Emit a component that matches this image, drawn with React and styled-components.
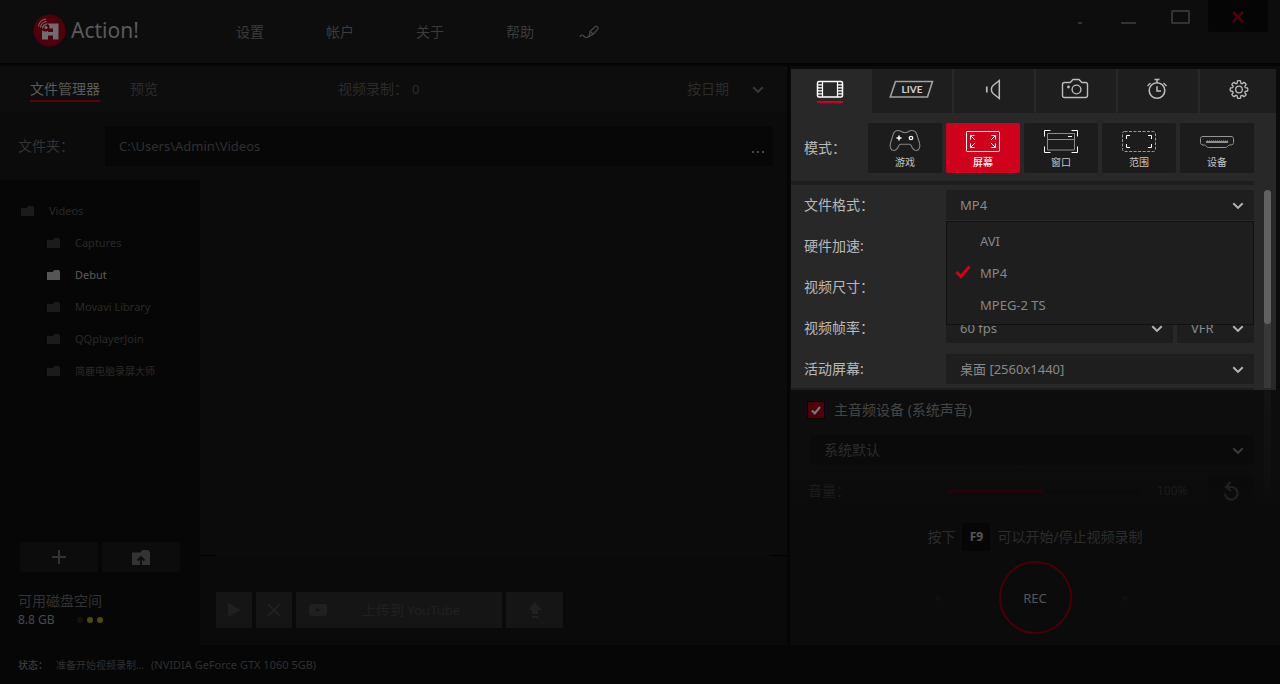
import React from 'react';
import styled, { createGlobalStyle, css } from 'styled-components';

const GlobalStyle = createGlobalStyle`
  *, *::before, *::after { box-sizing: border-box; }
  body {
    margin: 0;
    background: #060606;
    color: #333;
    font: 14px/20px "Noto Sans", "Noto Sans CJK SC", sans-serif;
  }
  button, input, select { font: inherit; color: inherit; margin: 0; }
  button { border: 0; padding: 0; background: none; cursor: pointer; }
  a { color: inherit; text-decoration: none; }
  ul { list-style: none; margin: 0; padding: 0; }
  svg { display: block; flex: none; }
`;

const Window = styled.div`
  display: flex;
  flex-direction: column;
  min-height: 100vh;
`;

/* ---------- Title bar ---------- */

const TitleBar = styled.header`
  display: flex;
  height: 66px;
  background: #0d0d0d;
  border-bottom: 3px solid #050505;
`;

const Brand = styled.div`
  display: flex;
  align-items: center;
  gap: 5px;
  width: 236px;
  padding: 0 0 3px 33px;
  color: #5a5a5a;
  font-size: 21px;
`;

const Nav = styled.nav`
  display: flex;
  align-items: center;
  gap: 62px;
  color: #3b3b3b;
`;

const PenButton = styled.button`
  padding: 0 12px;
  margin-left: 33px;
  color: #444;
`;

const WindowControls = styled.div`
  display: flex;
  margin-left: auto;
  padding-right: 12px;
  color: #333;
`;

const ControlButton = styled.button`
  display: grid;
  place-items: center;
  width: ${(p) => p.$width || 48}px;
  height: 32px;
  padding-top: 2px;
  ${(p) => p.$close && css`
    color: #50000a;
    background: #050505;
    border-radius: 0 0 3px 3px;
  `}
`;

/* ---------- Shared fields ---------- */

const SelectWrap = styled.span`
  display: grid;
  flex: ${(p) => p.$flex || 'none'};
  width: ${(p) => (p.$width ? `${p.$width}px` : 'auto')};
  min-width: 0;
  align-items: center;
  color: ${(p) => p.$icon || '#b4b4b4'};
  > * { grid-area: 1 / 1; }
  > svg { justify-self: end; margin: 2px 10px 0 0; pointer-events: none; }
`;

const NativeSelect = styled.select`
  appearance: none;
  width: 100%;
  height: 30px;
  padding: 0 30px 0 ${(p) => (p.$bare ? 0 : 14)}px;
  border: 0;
  border-radius: 2px;
  outline: 0;
  background: ${(p) => p.$bg || '#1e1e1e'};
  color: ${(p) => p.$text || '#898989'};
  font-size: ${(p) => p.$size || 13}px;
`;

/* ---------- File manager ---------- */

const Main = styled.main`
  display: grid;
  grid-template-columns: minmax(0, 1fr) 490px;
  gap: 3px;
  flex: 1;
  background: #050505;
`;

const FilePanel = styled.section`
  display: flex;
  flex-direction: column;
  background: #0b0b0b;
`;

const FileTabs = styled.div`
  display: flex;
  align-items: center;
  height: 46px;
  padding: 0 13px 0 30px;
  background: #0d0d0d;
  color: #2b2b2b;
`;

const TabGroup = styled.div`
  display: flex;
  gap: 30px;
  width: 308px;
`;

const FileTab = styled.button`
  height: 26px;
  padding-top: 2px;
  border-bottom: 2px solid transparent;
  ${(p) => p.$active && css`
    color: #5a5a5a;
    border-color: #60000a;
  `}
`;

const Counter = styled.span`
  flex: 1;
  display: flex;
  gap: 4px;
  b { font-weight: 400; font-size: 13px; }
`;

const FolderRow = styled.div`
  display: flex;
  align-items: center;
  padding: 14px 14px 14px 18px;
  label { width: 87px; }
`;

const PathBox = styled.div`
  display: flex;
  flex: 1;
  height: 40px;
  background: #070707;
  border-radius: 2px;
  color: #303030;
`;

const PathInput = styled.input`
  flex: 1;
  min-width: 0;
  padding: 0 14px;
  border: 0;
  outline: 0;
  background: none;
  font-size: 13px;
`;

const BrowseButton = styled.button`
  width: 30px;
  padding-top: 12px;
  display: grid;
  place-items: center;
`;

const Browser = styled.div`
  display: grid;
  grid-template-columns: 200px minmax(0, 1fr);
  flex: 1;
`;

const Sidebar = styled.aside`
  display: flex;
  flex-direction: column;
  padding: 14px 0 16px;
  background: #060606;
  border-top: 1px solid #050505;
`;

const Folder = styled.button`
  display: flex;
  align-items: center;
  gap: 15px;
  width: 100%;
  height: 32px;
  padding-left: ${(p) => (p.$root ? 21 : 47)}px;
  color: ${(p) => (p.$active ? '#5c5c5c' : '#292929')};
  svg { color: ${(p) => (p.$active ? '#555' : '#1b1b1b')}; }
  span { font-size: ${(p) => (p.$small ? 10 : 11)}px; }
`;

const FolderActions = styled.div`
  display: flex;
  gap: 4px;
  margin-top: auto;
  padding: 0 20px;
`;

const FolderAction = styled.button`
  flex: 1;
  display: grid;
  place-items: center;
  height: 30px;
  background: #0c0c0c;
  border-radius: 2px;
  color: #333;
`;

const DiskSpace = styled.div`
  padding: 19px 18px 0;
  color: #333;
`;

const DiskFree = styled.div`
  display: flex;
  align-items: center;
  gap: 22px;
  line-height: 18px;
  font-size: 12px;
  color: #4a4a4a;
`;

const Dots = styled.span`
  display: flex;
  gap: 4px;
`;

const Dot = styled.i`
  width: 6px;
  height: 6px;
  border-radius: 50%;
  background: ${(p) => p.$color};
`;

const Content = styled.div`
  display: flex;
  flex-direction: column;
`;

const FileList = styled.div`
  flex: 1;
`;

const Rule = styled.div`
  display: flex;
  justify-content: space-between;
  height: 1px;
  &::before, &::after { content: ''; width: 16px; background: #000; }
`;

const FileActions = styled.div`
  display: flex;
  gap: 4px;
  padding: 36px 16px 17px;
  background: #0a0a0a;
  color: #202020;
`;

const FileAction = styled.button`
  display: flex;
  align-items: center;
  justify-content: center;
  width: ${(p) => p.$width}px;
  height: 36px;
  background: #151515;
  border-radius: 1px;
  span { flex: 1; padding-right: 20px; }
  small { font-size: 13px; }
`;

/* ---------- Recording panel ---------- */

const RecordPanel = styled.section`
  display: flex;
  flex-direction: column;
  background: #0b0b0b;
  padding-top: 3px;
`;

const Lit = styled.div`
  margin: 0 4px 0 1px;
  background: #282828;
  color: #b9b9b9;
`;

const SourceTabs = styled.div`
  display: grid;
  grid-template-columns: 79px repeat(5, 80px);
  gap: 2px;
  height: 44px;
  overflow: hidden;
`;

const SourceTab = styled.button`
  display: flex;
  flex-direction: column;
  align-items: center;
  padding: 9px 2px 0 0;
  background: ${(p) => (p.$active ? 'none' : '#1e1e1e')};
  color: ${(p) => (p.$active ? '#fff' : '#bcbcbc')};
  &::after {
    content: '';
    width: 26px;
    height: 2px;
    background: ${(p) => (p.$active ? '#d0021b' : 'none')};
  }
`;

const Modes = styled.div`
  display: flex;
  align-items: center;
  gap: 4px;
  padding: 10px 22px 8px 13px;
`;

const ModesLabel = styled.span`
  flex: 1;
`;

const ModeButton = styled.button`
  display: flex;
  flex-direction: column;
  align-items: center;
  gap: 2px;
  width: 74px;
  height: 50px;
  padding-top: 6px;
  border-radius: 2px;
  font-size: 10px;
  line-height: 14px;
  background: ${(p) => (p.$active ? '#d0021b' : '#1c1c1c')};
  color: ${(p) => (p.$active ? '#fff' : '#c6c6c6')};
  font-weight: ${(p) => (p.$active ? 500 : 400)};
`;

const Separator = styled.div`
  height: ${(p) => p.$height}px;
  margin-right: 22px;
  background: #1e1e1e;
`;

const Scroller = styled.div`
  display: flex;
`;

const Fields = styled.div`
  flex: 1;
  display: flex;
  flex-direction: column;
  gap: 11px;
  padding: 5px 10px 4px 13px;
`;

const FieldRow = styled.div`
  position: relative;
  display: flex;
  gap: 4px;
  height: 30px;
  align-items: center;
  > label { flex: 1; }
`;

const Rail = styled.div`
  width: 7px;
  margin: ${(p) => (p.$lit ? '5px 5px 0 0' : '0 9px 0 0')};
  border-radius: ${(p) => (p.$lit ? '4px 4px 0 0' : '0')};
  background: ${(p) => (p.$lit ? '#383838' : 'linear-gradient(#131313, #101010 70%, #0b0b0b)')};
`;

const Thumb = styled.div`
  height: 134px;
  border-radius: 4px;
  background: #626262;
`;

const Menu = styled.ul`
  position: absolute;
  z-index: 2;
  top: 31px;
  right: 0;
  width: 308px;
  padding: 3px 0;
  background: #1e1e1e;
  border: 1px solid #121212;
`;

const Option = styled.li`
  display: grid;
  grid-template-columns: 25px 1fr;
  align-items: center;
  height: 32px;
  padding-left: 8px;
  font-size: 13px;
  color: #868686;
  svg { color: #d0021b; margin-bottom: 3px; }
  span { grid-column: 2; }
`;

const AudioFields = styled.div`
  flex: 1;
  display: flex;
  flex-direction: column;
  gap: 11px;
  padding: 6px 10px 0 18px;
`;

const AudioSection = styled.div`
  display: flex;
  height: 116px;
  background: linear-gradient(#0d0d0d 50%, #0b0b0b);
`;

const AudioToggle = styled.label`
  display: flex;
  align-items: center;
  height: 30px;
  gap: 10px;
  color: #454545;
`;

const CheckSlot = styled.span`
  display: grid;
  place-items: center;
  color: #777;
  > * { grid-area: 1 / 1; }
  > svg { pointer-events: none; }
`;

const CheckInput = styled.input`
  appearance: none;
  width: 16px;
  height: 16px;
  background: #500009;
  border-radius: 1px;
  outline: 1px solid #060606;
`;

const SelectRow = styled.div`
  display: flex;
  padding-left: 2px;
`;

const VolumeRow = styled.div`
  display: flex;
  align-items: center;
  height: 30px;
  color: #1c1c1c;
  label { width: 140px; }
  output { width: 68px; padding-left: 17px; font-size: 12px; }
`;

const Slider = styled.input`
  appearance: none;
  flex: 1;
  min-width: 0;
  height: 4px;
  background: linear-gradient(90deg, #20060a 50%, #0a0a0a 50%);
  &::-webkit-slider-thumb { appearance: none; width: 0; }
`;

const ResetButton = styled.button`
  display: grid;
  place-items: center;
  width: 46px;
  height: 30px;
  color: #212121;
  background: linear-gradient(#0a0a0a, #0b0b0b);
`;

const RecordArea = styled.div`
  display: flex;
  flex-direction: column;
  align-items: center;
  flex: 1;
  padding-top: 16px;
  border-top: 1px solid #0a0a0a;
`;

const Hint = styled.p`
  display: flex;
  align-items: center;
  gap: 7px;
  margin: 0;
  color: #2c2c2c;
`;

const Key = styled.kbd`
  width: 28px;
  background: #060606;
  border-radius: 3px;
  color: #565656;
  font: 700 12px/28px "Noto Sans", sans-serif;
  text-align: center;
`;

const RecordRow = styled.div`
  display: grid;
  grid-template-columns: 64px 73px 56px;
  align-items: center;
  margin-top: 10px;
  padding-right: 8px;
  > :last-child { justify-self: end; }
`;

const RecordButton = styled.button`
  width: 73px;
  height: 73px;
  border: 2px solid #480005;
  border-radius: 50%;
  color: #565656;
  font-size: 13px;
`;

/* ---------- Status bar ---------- */

const StatusBar = styled.footer`
  display: flex;
  align-items: center;
  height: 39px;
  padding-left: 18px;
  background: #060606;
  color: #303030;
  font-size: 10px;
  strong { width: 38px; font-weight: 500; color: #3c3c3c; }
  span { margin-right: 7px; }
  em { font-style: normal; font-size: 11px; }
`;

/* ---------- Icons ---------- */

const Icon = ({ w, h, children, sw = 1, fill = 'none' }) => (
  <svg width={w} height={h} viewBox={`0 0 ${w} ${h}`} fill={fill} stroke="currentColor" strokeWidth={sw} aria-hidden="true">
    {children}
  </svg>
);

const Chevron = () => (
  <Icon w={12} h={8} sw={2}><path d="M1.3 1.3 6 5.9l4.7-4.6" /></Icon>
);

const Tick = ({ w = 16, h = 14, sw = 3 }) => (
  <svg width={w} height={h} viewBox="0 0 16 14" fill="none" stroke="currentColor" strokeWidth={sw} aria-hidden="true">
    <path d="M1.5 7 6 11.5 14.5 1.5" />
  </svg>
);

const Logo = () => (
  <svg width="33" height="33" viewBox="0 0 33 33" aria-hidden="true">
    <circle cx="16.5" cy="16.5" r="16" fill="#50000b" />
    <path d="M12 9.500h13.500v16H20v-4h-5v4H9V15h3zM15 14.500v3.500h5v-3.500z" fill="#6e6e6e" fillRule="evenodd" />
    <circle cx="12.500" cy="13.500" r="4" fill="#50000b" />
    <circle cx="13" cy="13.500" r="1.600" fill="#6e6e6e" />
    <path d="M9.500 14.500a4.200 4.200 0 0 1 4.200-4.200M7.500 13.500a6.500 6.500 0 0 1 6-6M5.500 12.500a8.500 8.500 0 0 1 7.500-7.500" fill="none" stroke="#6e6e6e" strokeWidth="1.200" />
  </svg>
);

const PenIcon = () => (
  <Icon w={21} h={14} sw={1.3}>
    <path d="M.8 11.800c1.200-2 2.800-2.200 4-.600s2.400 1.900 3.900.900l1.500-1.300M10.300 11.300l.800-5 5.300-4.800c1-.9 3.300.8 2.500 2.300l-4.600 5.400-4 2.100zM11.300 6.600l3 2.600" />
  </Icon>
);

const FolderIcon = () => (
  <svg width="13" height="10" viewBox="0 0 13 10" fill="currentColor" aria-hidden="true">
    <path d="M0 2h5.500L7.500 0H12l1 1.500V10H0z" />
  </svg>
);

const FolderUpIcon = () => (
  <svg width="18" height="15" viewBox="0 0 18 15" aria-hidden="true">
    <path d="M0 2.500h8L10.500 0H16l2 2v13H0z" fill="currentColor" />
    <path d="M9 15V7M5.500 10.500 9 7l3.500 3.500" fill="none" stroke="#0c0c0c" strokeWidth="1.800" />
  </svg>
);

const FilmIcon = () => (
  <Icon w={28} h={23} sw={1.5}>
    <rect x="1.500" y="3.500" width="25" height="15.500" rx="1.500" />
    <path d="M6.500 3.500V19M21.500 3.500V19" strokeWidth="1.200" />
    <path d="M1.500 6.800h5M1.500 9.800h5M1.500 12.800h5M1.500 15.900h5M21.500 6.800h5M21.500 9.800h5M21.500 12.800h5M21.500 15.900h5" strokeWidth="1.300" />
  </Icon>
);

const LiveIcon = () => (
  <Icon w={46} h={23} sw={1.6}>
    <path d="M7.500 3.500H44.500l-5 15.500H2.300z" stroke="#a0a0a0" />
    <text x="24" y="15" textAnchor="middle" fontSize="10" fontWeight="700" fontFamily="Lato, sans-serif" fill="#d2d2d2" stroke="none">LIVE</text>
  </Icon>
);

const SpeakerIcon = () => (
  <Icon w={18} h={23} sw={1.5}>
    <path d="M15.300 2.500v18l-6.200-5c-2.300-2-2.300-6 0-8z" />
    <path d="M2.800 8.500v6" strokeWidth="1.700" />
  </Icon>
);

const CameraIcon = () => (
  <Icon w={28} h={23} sw={1.4}>
    <path d="M3.500 4.500h5.700L12 1.500h6l2.800 3h3.700c1.300 0 2 .8 2 2v11c0 1.300-.8 2-2 2h-21c-1.300 0-2-.7-2-2v-11c0-1.200.7-2 2-2z" />
    <circle cx="15.500" cy="11.500" r="4.400" />
    <circle cx="7.500" cy="9" r=".700" fill="currentColor" />
  </Icon>
);

const TimerIcon = () => (
  <Icon w={22} h={23} sw={1.6}>
    <circle cx="11" cy="12.500" r="7.800" />
    <path d="M11 8.300v4.700h4M11 1.500v3M8.500 1.500h5" strokeWidth="1.500" />
    <path d="m1.500 8 3-3M20.500 8l-3-3" strokeWidth="1.300" />
  </Icon>
);

const gearPath = Array.from({ length: 8 }, (_, i) => {
  const at = (r, deg) => {
    const a = ((i * 45 + deg) * Math.PI) / 180;
    return `${(10 + r * Math.sin(a)).toFixed(2)} ${(11.5 - r * Math.cos(a)).toFixed(2)}`;
  };
  return `${i ? 'L' : 'M'}${at(6.7, -16)}L${at(8.7, -10)}Q${at(9.2, 0)} ${at(8.7, 10)}L${at(6.7, 16)}Q${at(6.100, 22.5)} ${at(6.7, 29)}`;
}).join('') + 'Z';

const GearIcon = () => (
  <Icon w={20} h={23} sw={1.3}>
    <path d={gearPath} strokeLinejoin="round" />
    <circle cx="10" cy="11.500" r="3.300" />
  </Icon>
);

const GameIcon = () => (
  <Icon w={32} h={24} sw={1.1}>
    <path d="M9.500 1.500c-2.500 0-4.500 1.200-5.300 3.800L1.500 14c-1 4 .3 7.500 3.300 7.500 2.800 0 3.500-1.800 4.800-4.500.6-1.300 1.200-1.800 2.400-1.800h8c1.200 0 1.800.5 2.400 1.800 1.300 2.700 2 4.500 4.800 4.500 3 0 4.300-3.500 3.300-7.500l-2.700-8.700c-.8-2.600-2.800-3.800-5.300-3.800-2 0-2.500.8-3.300 1.300-1.800 1-4.600 1-6.400 0-.8-.5-1.300-1.300-3.300-1.300z" stroke="#858585" />
    <path d="M10 6.500v5M7.500 9h5" stroke="#fff" strokeWidth="1.500" />
    <circle cx="22" cy="9" r="1.700" stroke="#fff" strokeWidth="1.300" />
  </Icon>
);

const ScreenIcon = () => (
  <Icon w={34} h={24}>
    <rect x=".5" y="2.500" width="33" height="20" rx=".8" />
    <path d="M9 11 4.500 6.500M4.500 10.500v-4h4M25 11l4.500-4.500M25.500 6.500h4v4M9 14l-4.500 4.500M4.500 14.500v4h4M25 14l4.500 4.500M25.500 18.500h4v-4" />
  </Icon>
);

const WindowIcon = () => (
  <Icon w={34} h={24}>
    <path d="M.5 7.500v-6h6M27.500 1.500h6v6M.5 17.500v6h6M27.500 23.500h6v-6" stroke="#fff" />
    <path d="M3.500 4.500h27v16.500h-27zM3.500 10.500h27" stroke="#8a8a8a" />
    <path d="M24 7.500h4" stroke="#fff" />
  </Icon>
);

const RegionIcon = () => (
  <Icon w={34} h={24}>
    <rect x=".5" y="2.500" width="33" height="20" rx="2" stroke="#999" strokeDasharray="3 1.500" />
    <path d="M4.500 10V6.500H8M26 6.500h3.500V10M4.500 15v3.500H8M26 18.500h3.500V15" stroke="#fff" />
  </Icon>
);

const DeviceIcon = () => (
  <Icon w={34} h={24}>
    <path d="M3 7.500h28c1.500 0 2.500.8 2.500 2v4c0 1.500-1 2.500-2.500 2.500h-1.500c-1.500 0-2 2.500-4 2.500H8.500c-2 0-2.500-2.500-4-2.500H3C1.500 16 .5 15 .5 13.500v-4c0-1.200 1-2 2.500-2z" stroke="#959595" />
    <path d="M6 13h22" stroke="#fff" />
    <path d="M7 12h21" stroke="#999" strokeDasharray="1 1" />
  </Icon>
);

const ResetIcon = () => (
  <Icon w={18} h={20} sw={2.2}>
    <path d="M5 6h4.500a6.300 6.300 0 1 1-6.500 6.500M8.500 1 4 5.800l5 4.200" />
  </Icon>
);

/* ---------- Components ---------- */

const Select = ({ id, label, options = [], flex, width, icon, ...look }) => (
  <SelectWrap $flex={flex} $width={width} $icon={icon}>
    <NativeSelect id={id} aria-label={label} {...look}>
      {options.map((o) => <option key={o}>{o}</option>)}
    </NativeSelect>
    <Chevron />
  </SelectWrap>
);

const folders = [
  { name: 'Videos', root: true },
  { name: 'Captures' },
  { name: 'Debut', active: true },
  { name: 'Movavi Library' },
  { name: 'QQplayerJoin' },
  { name: '简鹿电脑录屏大师', small: true },
];

const sources = [
  ['视频', FilmIcon],
  ['直播', LiveIcon],
  ['音频', SpeakerIcon],
  ['截图', CameraIcon],
  ['定时', TimerIcon],
  ['选项', GearIcon],
];

const modes = [
  ['游戏', GameIcon],
  ['屏幕', ScreenIcon],
  ['窗口', WindowIcon],
  ['范围', RegionIcon],
  ['设备', DeviceIcon],
];

const FileManager = () => (
  <FilePanel>
    <FileTabs>
      <TabGroup>
        <FileTab $active>文件管理器</FileTab>
        <FileTab>预览</FileTab>
      </TabGroup>
      <Counter>视频录制： <b>0</b></Counter>
      <Select label="排序" options={['按日期']} width={87} icon="#3a3a3a" $bare $bg="#0d0d0d" $text="#2b2b2b" $size={14} />
    </FileTabs>
    <FolderRow>
      <label htmlFor="path">文件夹：</label>
      <PathBox>
        <PathInput id="path" defaultValue="C:\Users\Admin\Videos" />
        <BrowseButton aria-label="浏览">
          <svg width="13" height="2" viewBox="0 0 13 2" fill="#444"><path d="M0 0h2v2H0zM5 0h2v2H5zM10 0h2v2h-2z" /></svg>
        </BrowseButton>
      </PathBox>
    </FolderRow>
    <Browser>
      <Sidebar>
        <ul>
          {folders.map((f) => (
            <li key={f.name}>
              <Folder $root={f.root} $active={f.active} $small={f.small}>
                <FolderIcon />
                <span>{f.name}</span>
              </Folder>
            </li>
          ))}
        </ul>
        <FolderActions>
          <FolderAction aria-label="添加文件夹"><Icon w={14} h={14} sw={2}><path d="M7 0v14M0 7h14" /></Icon></FolderAction>
          <FolderAction aria-label="上级文件夹"><FolderUpIcon /></FolderAction>
        </FolderActions>
        <DiskSpace>
          可用磁盘空间
          <DiskFree>
            8.8 GB
            <Dots><Dot $color="#121212" /><Dot $color="#4d4d00" /><Dot $color="#4d4d00" /></Dots>
          </DiskFree>
        </DiskSpace>
      </Sidebar>
      <Content>
        <FileList />
        <Rule />
        <FileActions>
          <FileAction $width={36} aria-label="播放">
            <svg width="13" height="14" viewBox="0 0 13 14" fill="currentColor"><path d="M0 0v14l13-7z" /></svg>
          </FileAction>
          <FileAction $width={36} aria-label="删除">
            <Icon w={14} h={14} sw={2}><path d="m1 1 12 12M13 1 1 13" /></Icon>
          </FileAction>
          <FileAction $width={206}>
            <svg width="44" height="14" viewBox="0 0 44 14" aria-hidden="true">
              <rect x="13" y="1" width="18" height="12" rx="3" fill="currentColor" />
              <path d="M20 4.500v5l4.500-2.500z" fill="#151515" />
            </svg>
            <span>上传到 <small>YouTube</small></span>
          </FileAction>
          <FileAction $width={57} aria-label="上传">
            <svg width="14" height="16" viewBox="0 0 14 16" fill="currentColor"><path d="M7 0 0 8h4v4h6V8h4zM4 14h6v2H4z" /></svg>
          </FileAction>
        </FileActions>
      </Content>
    </Browser>
  </FilePanel>
);

const Recorder = () => (
  <RecordPanel>
    <Lit>
      <SourceTabs>
        {sources.map(([name, Glyph], i) => (
          <SourceTab key={name} aria-label={name} $active={i === 0}><Glyph /></SourceTab>
        ))}
      </SourceTabs>
      <Modes>
        <ModesLabel>模式：</ModesLabel>
        {modes.map(([name, Glyph]) => (
          <ModeButton key={name} $active={name === '屏幕'}><Glyph />{name}</ModeButton>
        ))}
      </Modes>
      <Separator $height={4} />
      <Scroller>
        <Fields>
          <FieldRow>
            <label htmlFor="format">文件格式：</label>
            <Select id="format" options={['MP4']} width={308} />
            <Menu role="listbox" aria-label="文件格式">
              {['AVI', 'MP4', 'MPEG-2 TS'].map((o) => (
                <Option key={o} role="option" aria-selected={o === 'MP4'}>
                  {o === 'MP4' && <Tick />}
                  <span>{o}</span>
                </Option>
              ))}
            </Menu>
          </FieldRow>
          <FieldRow>
            <label htmlFor="hardware">硬件加速:</label>
            <Select id="hardware" width={308} />
          </FieldRow>
          <FieldRow>
            <label htmlFor="size">视频尺寸：</label>
            <Select id="size" width={308} />
          </FieldRow>
          <FieldRow>
            <label htmlFor="rate">视频帧率：</label>
            <Select id="rate" options={['60 fps']} width={227} />
            <Select label="帧率模式" options={['VFR']} width={77} />
          </FieldRow>
          <FieldRow>
            <label htmlFor="display">活动屏幕:</label>
            <Select id="display" options={['桌面 [2560x1440]']} width={308} />
          </FieldRow>
        </Fields>
        <Rail $lit><Thumb /></Rail>
      </Scroller>
      <Separator $height={2} />
    </Lit>
    <AudioSection>
      <AudioFields>
        <AudioToggle>
          <CheckSlot>
            <CheckInput type="checkbox" defaultChecked />
            <Tick w={10} h={9} sw={3.4} />
          </CheckSlot>
          主音频设备 (系统声音)
        </AudioToggle>
        <SelectRow>
          <Select label="主音频设备" options={['系统默认']} flex="1" icon="#3c3c3c" $bg="#0a0a0a" $text="#2c2c2c" $size={14} />
        </SelectRow>
        <VolumeRow>
          <label htmlFor="volume">音量：</label>
          <Slider id="volume" type="range" defaultValue="50" />
          <output htmlFor="volume">100%</output>
          <ResetButton aria-label="重置"><ResetIcon /></ResetButton>
        </VolumeRow>
      </AudioFields>
      <Rail />
    </AudioSection>
    <RecordArea>
      <Hint>按下<Key>F9</Key>可以开始/停止视频录制</Hint>
      <RecordRow>
        <Dot $color="#101010" />
        <RecordButton>REC</RecordButton>
        <Dot $color="#101010" />
      </RecordRow>
    </RecordArea>
  </RecordPanel>
);

export default function App() {
  return (
    <Window>
      <GlobalStyle />
      <TitleBar>
        <Brand><Logo />Action!</Brand>
        <Nav>
          <a href="#settings">设置</a>
          <a href="#account">帐户</a>
          <a href="#about">关于</a>
          <a href="#help">帮助</a>
        </Nav>
        <PenButton aria-label="绘图"><PenIcon /></PenButton>
        <WindowControls>
          <ControlButton aria-label="托盘"><Icon w={4} h={14} sw={2}><path d="M0 13h4" /></Icon></ControlButton>
          <ControlButton aria-label="最小化"><Icon w={15} h={14} sw={2}><path d="M0 13h15" /></Icon></ControlButton>
          <ControlButton $width={56} aria-label="最大化"><Icon w={19} h={14} sw={2}><rect x="1" y="1" width="17" height="12" rx=".5" /></Icon></ControlButton>
          <ControlButton $width={60} $close aria-label="关闭"><Icon w={12} h={12} sw={2.6}><path d="m1 1 10 10M11 1 1 11" /></Icon></ControlButton>
        </WindowControls>
      </TitleBar>
      <Main>
        <FileManager />
        <Recorder />
      </Main>
      <StatusBar>
        <strong>状态：</strong>
        <span>准备开始视频录制...</span>
        <em>(NVIDIA GeForce GTX 1060 5GB)</em>
      </StatusBar>
    </Window>
  );
}
